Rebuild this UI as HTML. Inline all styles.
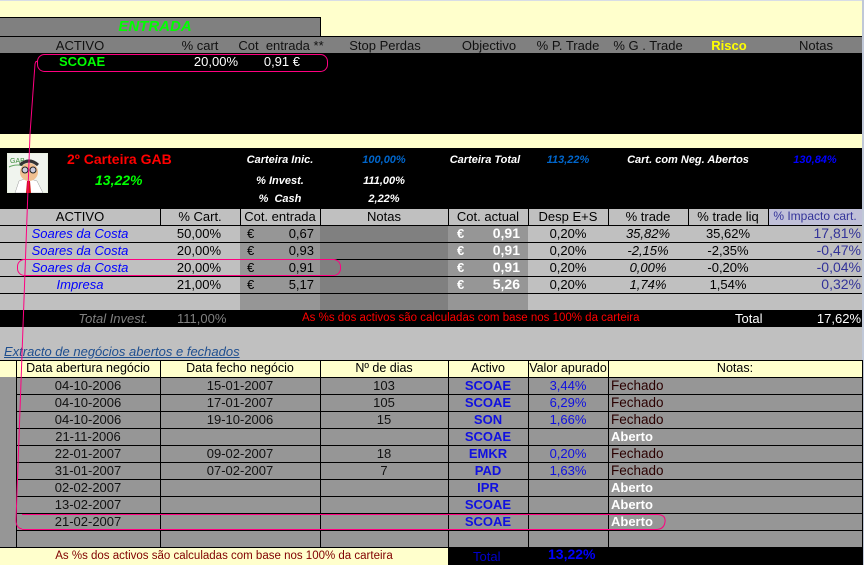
<!DOCTYPE html>
<html><head><meta charset="utf-8"><style>
*{margin:0;padding:0;box-sizing:border-box}
body{width:864px;height:565px;background:#ffffcc;position:relative;overflow:hidden;font-family:"Liberation Sans",Arial,sans-serif;font-size:13px}
.b{position:absolute}
.t{position:absolute;white-space:nowrap;line-height:17px;height:17px}
.c{text-align:center}
.r{text-align:right}
.hl{position:absolute;height:1px;background:#000}
.vl{position:absolute;width:1px;background:#000}
.fe{color:#2a0000;font-size:13.5px}
</style></head><body>
<div class="b" style="left:0;top:0;width:864px;height:1px;background:#d8dde6"></div>
<div class="b" style="left:862px;top:0;width:2px;height:565px;background:#c0c8d8"></div>
<div class="b" style="left:0;top:17px;width:321px;height:19px;background:#808080;border-right:1px solid #000;border-top:1px solid #000"></div>
<div class="t c" style="left:0;top:18px;width:310px;color:#00ff00;font-weight:bold;font-style:italic;font-size:15px">ENTRADA</div>
<div class="b" style="left:0;top:36px;width:862px;height:17px;background:#808080;border-top:1px solid #000"></div>
<div class="t c" style="left:40px;top:37px;width:80px;color:#111">ACTIVO</div>
<div class="t c" style="left:160px;top:37px;width:80px;color:#111">% cart</div>
<div class="t c" style="left:238px;top:37px;width:86px;color:#111">Cot&nbsp; entrada **</div>
<div class="t c" style="left:335px;top:37px;width:100px;color:#111">Stop Perdas</div>
<div class="t c" style="left:449px;top:37px;width:80px;color:#111">Objectivo</div>
<div class="t c" style="left:528px;top:37px;width:80px;color:#111">% P. Trade</div>
<div class="t c" style="left:608px;top:37px;width:80px;color:#111">% G . Trade</div>
<div class="t c" style="left:689px;top:37px;width:80px;color:#ffff00;font-weight:bold">Risco</div>
<div class="t c" style="left:776px;top:37px;width:80px;color:#111">Notas</div>
<div class="b" style="left:0;top:53px;width:862px;height:81px;background:#000"></div>
<div class="t" style="left:59px;top:53px;color:#00ff00;font-weight:bold">SCOAE</div>
<div class="t r" style="left:170px;top:53px;width:68px;color:#fff">20,00%</div>
<div class="t r" style="left:250px;top:53px;width:50px;color:#fff">0,91 €</div>
<div class="b" style="left:0;top:148px;width:862px;height:60px;background:#000"></div>
<svg class="b" style="left:7px;top:153px" width="41" height="40" viewBox="0 0 41 40">
<rect width="41" height="40" fill="#e8f0e0"/><rect x="1" y="1" width="39" height="38" fill="#f0f4ee"/>
<text x="3" y="10" font-size="7" fill="#3a8a3a" font-family="Liberation Sans">GAB</text>
<path d="M2 14 Q10 10 20 14" stroke="#6a6" fill="none"/>
<path d="M8 40 L12 28 Q20 24 30 28 L36 40Z" fill="#fff" stroke="#999" stroke-width=".5"/>
<path d="M20 28 L23 28 L24 40 L19 40Z" fill="#d01010"/>
<ellipse cx="22" cy="19" rx="9" ry="9" fill="#f0c090"/>
<path d="M13 12 Q22 4 31 12" stroke="#333" stroke-width="3" fill="none"/>
<circle cx="18" cy="17" r="3" fill="#ccd" stroke="#222"/><circle cx="26" cy="17" r="3" fill="#ccd" stroke="#222"/>
</svg>
<div class="t" style="left:67px;top:151px;color:#ff0000;font-weight:bold;font-size:14px">2º Carteira GAB</div>
<div class="t" style="left:95px;top:172px;color:#00ff00;font-weight:bold;font-style:italic;font-size:14px">13,22%</div>
<div class="t c" style="left:240px;top:152px;width:80px;color:#fff;font-weight:bold;font-style:italic;font-size:11px">Carteira Inic.</div>
<div class="t c" style="left:344px;top:152px;width:80px;color:#0066cc;font-weight:bold;font-style:italic;font-size:11px">100,00%</div>
<div class="t c" style="left:240px;top:173px;width:80px;color:#fff;font-weight:bold;font-style:italic;font-size:11px">% Invest.</div>
<div class="t c" style="left:344px;top:173px;width:80px;color:#fff;font-weight:bold;font-style:italic;font-size:11px">111,00%</div>
<div class="t c" style="left:240px;top:191px;width:80px;color:#fff;font-weight:bold;font-style:italic;font-size:11px">%&nbsp; Cash</div>
<div class="t c" style="left:344px;top:191px;width:80px;color:#fff;font-weight:bold;font-style:italic;font-size:11px">2,22%</div>
<div class="t c" style="left:445px;top:152px;width:80px;color:#fff;font-weight:bold;font-style:italic;font-size:11px">Carteira Total</div>
<div class="t c" style="left:528px;top:152px;width:80px;color:#0066cc;font-weight:bold;font-style:italic;font-size:11px">113,22%</div>
<div class="t c" style="left:620px;top:152px;width:136px;color:#fff;font-weight:bold;font-style:italic;font-size:11px">Cart. com Neg. Abertos</div>
<div class="t c" style="left:780px;top:152px;width:70px;color:#0000ff;font-weight:bold;font-style:italic;font-size:11px">130,84%</div>
<div class="b" style="left:0;top:208px;width:862px;height:102px;background:#c0c0c0"></div>
<div class="b" style="left:240px;top:225px;width:80px;height:85px;background:#969696"></div>
<div class="b" style="left:320px;top:225px;width:128px;height:85px;background:#808080"></div>
<div class="b" style="left:448px;top:225px;width:80px;height:85px;background:#969696"></div>
<div class="b" style="left:768px;top:208px;width:94px;height:17px;background:#c0c0d8"></div>
<div class="hl" style="left:0;top:208px;width:862px"></div>
<div class="hl" style="left:0;top:225px;width:862px"></div>
<div class="hl" style="left:0;top:242px;width:862px"></div>
<div class="hl" style="left:0;top:259px;width:862px"></div>
<div class="hl" style="left:0;top:276px;width:862px"></div>
<div class="hl" style="left:0;top:293px;width:862px"></div>
<div class="vl" style="left:160px;top:208px;height:17px"></div>
<div class="vl" style="left:240px;top:208px;height:17px"></div>
<div class="vl" style="left:320px;top:208px;height:17px"></div>
<div class="vl" style="left:448px;top:208px;height:17px"></div>
<div class="vl" style="left:528px;top:208px;height:17px"></div>
<div class="vl" style="left:608px;top:208px;height:17px"></div>
<div class="vl" style="left:688px;top:208px;height:17px"></div>
<div class="vl" style="left:768px;top:208px;height:17px"></div>
<div class="t c" style="left:0;top:208px;width:160px">ACTIVO</div>
<div class="t c" style="left:160px;top:208px;width:80px">% Cart.</div>
<div class="t c" style="left:240px;top:208px;width:80px">Cot. entrada</div>
<div class="t c" style="left:320px;top:208px;width:128px">Notas</div>
<div class="t c" style="left:448px;top:208px;width:80px">Cot. actual</div>
<div class="t c" style="left:528px;top:208px;width:80px">Desp E+S</div>
<div class="t c" style="left:608px;top:208px;width:80px">% trade</div>
<div class="t c" style="left:688px;top:208px;width:80px">% trade liq</div>
<div class="t c" style="left:768px;top:208px;width:94px;color:#333399;font-size:12px">% Impacto cart.</div>
<div class="t c" style="left:0;top:225px;width:160px;color:#0000ff;font-style:italic">Soares da Costa</div>
<div class="t c" style="left:0;top:242px;width:160px;color:#0000ff;font-style:italic">Soares da Costa</div>
<div class="t c" style="left:0;top:259px;width:160px;color:#0000ff;font-style:italic">Soares da Costa</div>
<div class="t c" style="left:0;top:276px;width:160px;color:#0000ff;font-style:italic">Impresa</div>
<div class="t r" style="left:160px;top:225px;width:61px">50,00%</div>
<div class="t r" style="left:160px;top:242px;width:61px">20,00%</div>
<div class="t r" style="left:160px;top:259px;width:61px">20,00%</div>
<div class="t r" style="left:160px;top:276px;width:61px">21,00%</div>
<div class="t" style="left:247px;top:225px">€</div><div class="t r" style="left:260px;top:225px;width:54px">0,67</div>
<div class="t" style="left:247px;top:242px">€</div><div class="t r" style="left:260px;top:242px;width:54px">0,93</div>
<div class="t" style="left:247px;top:259px">€</div><div class="t r" style="left:260px;top:259px;width:54px">0,91</div>
<div class="t" style="left:247px;top:276px">€</div><div class="t r" style="left:260px;top:276px;width:54px">5,17</div>
<div class="t" style="left:457px;top:225px;color:#fff;font-weight:bold">€</div><div class="t r" style="left:470px;top:225px;width:50px;color:#fff;font-weight:bold;font-size:14px">0,91</div>
<div class="t" style="left:457px;top:242px;color:#fff;font-weight:bold">€</div><div class="t r" style="left:470px;top:242px;width:50px;color:#fff;font-weight:bold;font-size:14px">0,91</div>
<div class="t" style="left:457px;top:259px;color:#fff;font-weight:bold">€</div><div class="t r" style="left:470px;top:259px;width:50px;color:#fff;font-weight:bold;font-size:14px">0,91</div>
<div class="t" style="left:457px;top:276px;color:#fff;font-weight:bold">€</div><div class="t r" style="left:470px;top:276px;width:50px;color:#fff;font-weight:bold;font-size:14px">5,26</div>
<div class="t c" style="left:528px;top:225px;width:80px">0,20%</div>
<div class="t c" style="left:528px;top:242px;width:80px">0,20%</div>
<div class="t c" style="left:528px;top:259px;width:80px">0,20%</div>
<div class="t c" style="left:528px;top:276px;width:80px">0,20%</div>
<div class="t c" style="left:608px;top:225px;width:80px;font-style:italic">35,82%</div>
<div class="t c" style="left:608px;top:242px;width:80px;font-style:italic">-2,15%</div>
<div class="t c" style="left:608px;top:259px;width:80px;font-style:italic">0,00%</div>
<div class="t c" style="left:608px;top:276px;width:80px;font-style:italic">1,74%</div>
<div class="t c" style="left:688px;top:225px;width:80px">35,62%</div>
<div class="t c" style="left:688px;top:242px;width:80px">-2,35%</div>
<div class="t c" style="left:688px;top:259px;width:80px">-0,20%</div>
<div class="t c" style="left:688px;top:276px;width:80px">1,54%</div>
<div class="t r" style="left:768px;top:225px;width:93px;color:#333399;font-size:14px">17,81%</div>
<div class="t r" style="left:768px;top:242px;width:93px;color:#333399;font-size:14px">-0,47%</div>
<div class="t r" style="left:768px;top:259px;width:93px;color:#333399;font-size:14px">-0,04%</div>
<div class="t r" style="left:768px;top:276px;width:93px;color:#333399;font-size:14px">0,32%</div>
<div class="b" style="left:0;top:310px;width:862px;height:17px;background:#000"></div>
<div class="t r" style="left:40px;top:310px;width:108px;color:#808080;font-style:italic">Total Invest.</div>
<div class="t" style="left:177px;top:310px;color:#808080">111,00%</div>
<div class="t" style="left:302px;top:310px;color:#ff0000;font-size:11.5px">As %s dos activos são calculadas com base nos 100% da carteira</div>
<div class="t" style="left:735px;top:310px;color:#fff">Total</div>
<div class="t r" style="left:780px;top:310px;width:81px;color:#fff">17,62%</div>
<div class="b" style="left:0;top:327px;width:862px;height:34px;background:#c0c0c0"></div>
<div class="t" style="left:4px;top:343px;color:#1f4f8f;font-style:italic;text-decoration:underline;font-size:13px">Extracto de negócios abertos e fechados</div>
<div class="b" style="left:0;top:377px;width:862px;height:170px;background:#969696"></div>
<div class="hl" style="left:0;top:360px;width:862px"></div>
<div class="vl" style="left:16px;top:360px;height:187px"></div>
<div class="vl" style="left:160px;top:360px;height:187px"></div>
<div class="vl" style="left:320px;top:360px;height:187px"></div>
<div class="vl" style="left:448px;top:360px;height:187px"></div>
<div class="vl" style="left:528px;top:360px;height:187px"></div>
<div class="vl" style="left:608px;top:360px;height:187px"></div>
<div class="vl" style="left:862px;top:360px;height:205px"></div>
<div class="hl" style="left:16px;top:377px;width:846px"></div>
<div class="hl" style="left:16px;top:394px;width:846px"></div>
<div class="hl" style="left:16px;top:411px;width:846px"></div>
<div class="hl" style="left:16px;top:428px;width:846px"></div>
<div class="hl" style="left:16px;top:445px;width:846px"></div>
<div class="hl" style="left:16px;top:462px;width:846px"></div>
<div class="hl" style="left:16px;top:479px;width:846px"></div>
<div class="hl" style="left:16px;top:496px;width:846px"></div>
<div class="hl" style="left:16px;top:513px;width:846px"></div>
<div class="hl" style="left:16px;top:530px;width:846px"></div>
<div class="hl" style="left:0;top:547px;width:862px"></div>
<div class="t c" style="left:16px;top:360px;width:144px;font-size:12.5px">Data abertura negócio</div>
<div class="t c" style="left:160px;top:360px;width:160px;font-size:12.5px">Data fecho negócio</div>
<div class="t c" style="left:320px;top:360px;width:128px;font-size:12.5px">Nº de dias</div>
<div class="t c" style="left:448px;top:360px;width:80px;font-size:12.5px">Activo</div>
<div class="t c" style="left:528px;top:360px;width:80px;font-size:12.5px">Valor apurado</div>
<div class="t c" style="left:608px;top:360px;width:254px;font-size:12.5px">Notas:</div>
<div class="t c" style="left:16px;top:377px;width:144px;color:#111">04-10-2006</div>
<div class="t c" style="left:16px;top:394px;width:144px;color:#111">04-10-2006</div>
<div class="t c" style="left:16px;top:411px;width:144px;color:#111">04-10-2006</div>
<div class="t c" style="left:16px;top:428px;width:144px;color:#111">21-11-2006</div>
<div class="t c" style="left:16px;top:445px;width:144px;color:#111">22-01-2007</div>
<div class="t c" style="left:16px;top:462px;width:144px;color:#111">31-01-2007</div>
<div class="t c" style="left:16px;top:479px;width:144px;color:#111">02-02-2007</div>
<div class="t c" style="left:16px;top:496px;width:144px;color:#111">13-02-2007</div>
<div class="t c" style="left:16px;top:513px;width:144px;color:#111">21-02-2007</div>
<div class="t c" style="left:160px;top:377px;width:160px;color:#111">15-01-2007</div>
<div class="t c" style="left:160px;top:394px;width:160px;color:#111">17-01-2007</div>
<div class="t c" style="left:160px;top:411px;width:160px;color:#111">19-10-2006</div>
<div class="t c" style="left:160px;top:445px;width:160px;color:#111">09-02-2007</div>
<div class="t c" style="left:160px;top:462px;width:160px;color:#111">07-02-2007</div>
<div class="t c" style="left:320px;top:377px;width:128px;color:#111">103</div>
<div class="t c" style="left:320px;top:394px;width:128px;color:#111">105</div>
<div class="t c" style="left:320px;top:411px;width:128px;color:#111">15</div>
<div class="t c" style="left:320px;top:445px;width:128px;color:#111">18</div>
<div class="t c" style="left:320px;top:462px;width:128px;color:#111">7</div>
<div class="t c" style="left:448px;top:377px;width:80px;color:#1010e0;font-weight:bold">SCOAE</div>
<div class="t c" style="left:448px;top:394px;width:80px;color:#1010e0;font-weight:bold">SCOAE</div>
<div class="t c" style="left:448px;top:411px;width:80px;color:#1010e0;font-weight:bold">SON</div>
<div class="t c" style="left:448px;top:428px;width:80px;color:#1010e0;font-weight:bold">SCOAE</div>
<div class="t c" style="left:448px;top:445px;width:80px;color:#1010e0;font-weight:bold">EMKR</div>
<div class="t c" style="left:448px;top:462px;width:80px;color:#1010e0;font-weight:bold">PAD</div>
<div class="t c" style="left:448px;top:479px;width:80px;color:#1010e0;font-weight:bold">IPR</div>
<div class="t c" style="left:448px;top:496px;width:80px;color:#1010e0;font-weight:bold">SCOAE</div>
<div class="t c" style="left:448px;top:513px;width:80px;color:#1010e0;font-weight:bold">SCOAE</div>
<div class="t c" style="left:528px;top:377px;width:80px;color:#1010e0">3,44%</div>
<div class="t c" style="left:528px;top:394px;width:80px;color:#1010e0">6,29%</div>
<div class="t c" style="left:528px;top:411px;width:80px;color:#1010e0">1,66%</div>
<div class="t c" style="left:528px;top:445px;width:80px;color:#1010e0">0,20%</div>
<div class="t c" style="left:528px;top:462px;width:80px;color:#1010e0">1,63%</div>
<div class="t fe" style="left:611px;top:377px">Fechado</div>
<div class="t fe" style="left:611px;top:394px">Fechado</div>
<div class="t fe" style="left:611px;top:411px">Fechado</div>
<div class="t" style="left:611px;top:428px;color:#fff;font-weight:bold">Aberto</div>
<div class="t fe" style="left:611px;top:445px">Fechado</div>
<div class="t fe" style="left:611px;top:462px">Fechado</div>
<div class="t" style="left:611px;top:479px;color:#fff;font-weight:bold">Aberto</div>
<div class="t" style="left:611px;top:496px;color:#fff;font-weight:bold">Aberto</div>
<div class="t" style="left:611px;top:513px;color:#fff;font-weight:bold">Aberto</div>
<div class="b" style="left:0;top:548px;width:448px;height:17px;background:#ffffcc"></div>
<div class="t c" style="left:0;top:548px;width:448px;color:#800000;font-size:11.5px">As %s dos activos são calculadas com base nos 100% da carteira</div>
<div class="b" style="left:448px;top:548px;width:414px;height:17px;background:#000"></div>
<div class="t" style="left:473px;top:548px;color:#0000cc">Total</div>
<div class="t" style="left:548px;top:546px;color:#0000ff;font-weight:bold;font-size:14px">13,22%</div>
<svg class="b" style="left:0;top:0" width="864" height="565">
<g fill="none" stroke="#ff0080" stroke-width="1">
<rect x="37.5" y="54.5" width="290" height="17" rx="7"/>
<path d="M37 62 Q36 60 35 64 L30 134 L16 520 Q16 528 22 529"/>
<rect x="17.5" y="259.5" width="323" height="16" rx="7"/>
<path d="M22 514.5 L658 514.5 Q666 515 665 522 Q664 529.5 656 529.5 L22 529.5"/>
</g>
</svg>
</body></html>
